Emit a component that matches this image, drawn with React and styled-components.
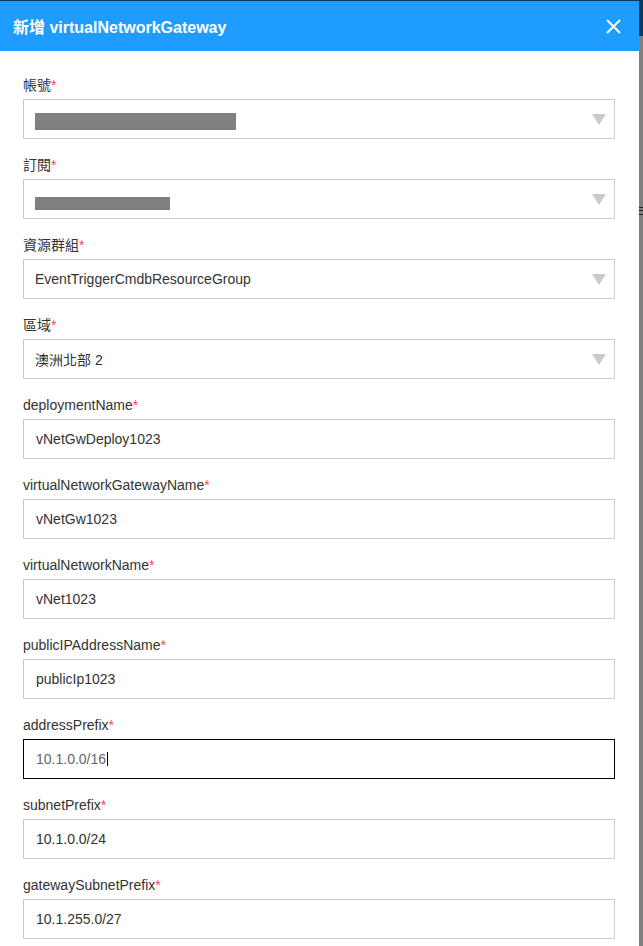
import React from "react";
import styled, { createGlobalStyle } from "styled-components";

const Global = createGlobalStyle`
  html, body { margin: 0; padding: 0; }
  body {
    background: #808080;
    font-family: "Liberation Sans", Arial, "Noto Sans CJK TC", sans-serif;
    overflow: hidden;
  }
  * { box-sizing: border-box; }
`;

const Backdrop = styled.div`
  width: 643px;
  height: 946px;
  display: flex;
  flex-direction: column;
  align-items: flex-end;
`;

const BackTopBar = styled.div`
  width: 100%;
  height: 36px;
  background: #0c3a5e;
`;

const BackMenuMark = styled.div`
  margin-top: 171px;
  width: 4px;
  height: 8px;
  border-top: 1px solid #222;
  border-bottom: 1px solid #222;
  position: relative;
  &::after {
    content: "";
    position: absolute;
    left: 0;
    right: 0;
    top: 2px;
    height: 1px;
    background: #222;
  }
`;

const Modal = styled.div`
  position: fixed;
  top: 1px;
  left: 0;
  width: 639px;
  bottom: 0;
  background: #fff;
  display: flex;
  flex-direction: column;
  overflow: hidden;
`;

const Header = styled.div`
  height: 50px;
  flex: none;
  background: #1f9cff;
  display: flex;
  align-items: center;
  justify-content: space-between;
  padding: 0 18px 0 13px;
`;

const Title = styled.h2`
  margin: 0;
  color: #fff;
  font-size: 16px;
  font-weight: bold;
  font-family: "Liberation Sans", Arial, "Noto Sans CJK TC", sans-serif;
`;

const CloseButton = styled.button`
  border: none;
  background: transparent;
  padding: 0;
  width: 16px;
  height: 16px;
  display: flex;
  align-items: center;
  justify-content: center;
  cursor: pointer;
`;

const Body = styled.div`
  padding: 24px 24px 0 23px;
  display: flex;
  flex-direction: column;
  gap: 16px;
`;

const Field = styled.div`
  display: flex;
  flex-direction: column;
  gap: 4px;
`;

const Label = styled.label`
  font-size: 14px;
  line-height: 20px;
  height: 20px;
  color: #333;
  font-family: "Liberation Sans", Arial, "Noto Sans CJK TC", sans-serif;
`;

const Required = styled.span`
  color: #f04a4a;
`;

const Box = styled.div`
  height: 40px;
  border: 1px solid ${(p) => (p.$focused ? "#000" : "#ccc")};
  background: #fff;
  display: flex;
  align-items: center;
  padding: 0 8px 0 ${(p) => (p.$select ? "11px" : "12px")};
  font-size: 14px;
  color: ${(p) => (p.$focused ? "#666" : "#333")};
  font-family: "Liberation Sans", Arial, "Noto Sans CJK TC", sans-serif;
`;

const Value = styled.span`
  flex: 1;
  display: flex;
  align-items: center;
  white-space: nowrap;
`;

const Redacted = styled.span`
  display: inline-block;
  background: #808080;
  height: ${(p) => p.$h}px;
  width: ${(p) => p.$w}px;
  margin-top: ${(p) => p.$dy}px;
`;

const Caret = styled.span`
  display: inline-block;
  width: 1px;
  height: 14px;
  background: #000;
  margin-left: 1px;
`;

const Arrow = styled.span`
  width: 0;
  height: 0;
  border-left: 7px solid transparent;
  border-right: 7px solid transparent;
  border-top: 11px solid #cbcbcb;
  flex: none;
`;

const fields = [
  { label: "帳號", select: true, redact: { w: 201, h: 17, dy: 4 } },
  { label: "訂閱", select: true, redact: { w: 135, h: 13, dy: 8 } },
  { label: "資源群組", select: true, value: "EventTriggerCmdbResourceGroup" },
  { label: "區域", select: true, value: "澳洲北部 2" },
  { label: "deploymentName", value: "vNetGwDeploy1023" },
  { label: "virtualNetworkGatewayName", value: "vNetGw1023" },
  { label: "virtualNetworkName", value: "vNet1023" },
  { label: "publicIPAddressName", value: "publicIp1023" },
  { label: "addressPrefix", value: "10.1.0.0/16", focused: true },
  { label: "subnetPrefix", value: "10.1.0.0/24" },
  { label: "gatewaySubnetPrefix", value: "10.1.255.0/27" },
];

export default function App() {
  return (
    <>
      <Global />
      <Backdrop>
        <BackTopBar />
        <BackMenuMark />
      </Backdrop>
      <Modal>
        <Header>
          <Title>新增 virtualNetworkGateway</Title>
          <CloseButton aria-label="close">
            <svg width="15" height="15" viewBox="0 0 15 15">
              <path d="M1 1 L14 14 M14 1 L1 14" stroke="#fff" strokeWidth="2" fill="none" />
            </svg>
          </CloseButton>
        </Header>
        <Body>
          {fields.map((f) => (
            <Field key={f.label}>
              <Label>
                {f.label}
                <Required>*</Required>
              </Label>
              <Box $select={f.select} $focused={f.focused}>
                <Value>
                  {f.redact ? (
                    <Redacted $w={f.redact.w} $h={f.redact.h} $dy={f.redact.dy} />
                  ) : (
                    f.value
                  )}
                  {f.focused && <Caret />}
                </Value>
                {f.select && <Arrow />}
              </Box>
            </Field>
          ))}
        </Body>
      </Modal>
    </>
  );
}
